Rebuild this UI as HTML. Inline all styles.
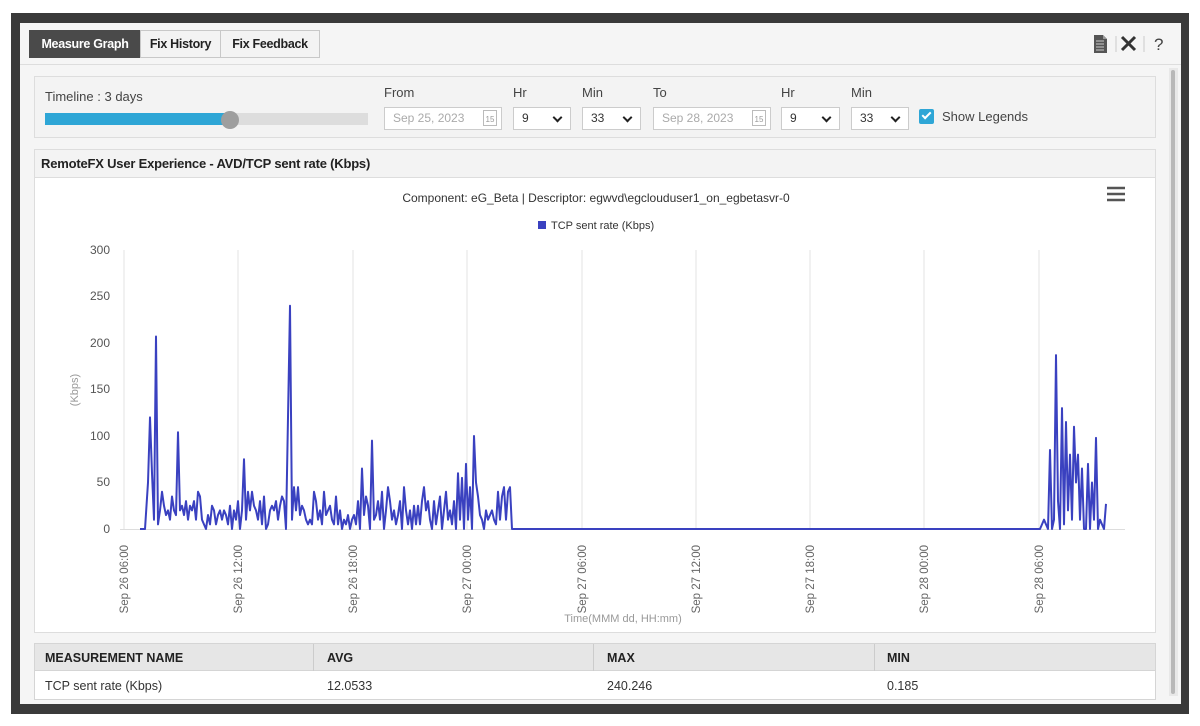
<!DOCTYPE html>
<html><head><meta charset="utf-8"><style>
*{box-sizing:border-box;margin:0;padding:0}
body{width:1200px;height:726px;background:#fff;position:relative;overflow:hidden;font-family:"Liberation Sans",sans-serif;font-size:13px;color:#333}
.a{position:absolute}
.frame{left:11px;top:13px;width:1178px;height:701px;background:#3a3a3a}
.inner{left:20px;top:23px;width:1161px;height:681px;background:#f5f5f5}
.tab{top:30px;height:28px;border:1px solid #c8c8c8;background:#f3f3f3;font-weight:bold;font-size:12.5px;line-height:26px;text-align:center;color:#222;letter-spacing:-0.3px}
.lbl{font-size:13px;color:#444}
.inp{height:23px;border:1px solid #ccc;background:#fff;font-size:12px;line-height:21px;padding-left:8px;color:#333}
.sel::after{content:"";position:absolute;right:9px;top:6px;width:5px;height:5px;border-right:2px solid #222;border-bottom:2px solid #222;transform:rotate(45deg)}
.th{font-weight:bold;font-size:12.5px;color:#222}
</style></head><body>
<div class="a frame"></div>
<div class="a inner"></div>
<div class="a tab" style="left:29px;width:112px;background:#4a4a4a;color:#fff;border-color:#4a4a4a">Measure Graph</div>
<div class="a tab" style="left:140px;width:81px">Fix History</div>
<div class="a tab" style="left:220px;width:100px">Fix Feedback</div>
<div class="a" style="left:20px;top:64px;width:1161px;height:1px;background:#ddd"></div>
<svg class="a" style="left:1092px;top:34px" width="80" height="20">
<path d="M2 1h9l4 4v14H2z" fill="#555"/><path d="M11 1v4h4" fill="#999"/>
<path d="M4 7h8M4 10h8M4 13h8M4 16h8" stroke="#ccc" stroke-width="1"/>
<line x1="24" y1="2" x2="24" y2="18" stroke="#ccc"/>
<path d="M30 3l13 13M43 3l-13 13" stroke="#333" stroke-width="3"/>
<line x1="52" y1="2" x2="52" y2="18" stroke="#ccc"/>
<text x="62" y="16" font-size="17" font-family="Liberation Sans" fill="#444">?</text>
</svg>
<div class="a" style="left:1169px;top:68px;width:9px;height:628px;background:#e8e8e8"></div>
<div class="a" style="left:1171px;top:70px;width:4px;height:624px;background:#b8b8b8;border-radius:2px"></div>
<div class="a" style="left:34px;top:76px;width:1122px;height:62px;background:#f3f3f3;border:1px solid #ddd"></div>
<div class="a lbl" style="left:45px;top:89px">Timeline : 3 days</div>
<div class="a" style="left:45px;top:113px;width:323px;height:12px;background:#ddd"></div>
<div class="a" style="left:45px;top:113px;width:186px;height:12px;background:#2ea6d6"></div>
<div class="a" style="left:221px;top:111px;width:18px;height:18px;border-radius:50%;background:#9e9e9e"></div>
<div class="a lbl" style="left:384px;top:85px">From</div>
<div class="a lbl" style="left:513px;top:85px">Hr</div>
<div class="a lbl" style="left:582px;top:85px">Min</div>
<div class="a lbl" style="left:653px;top:85px">To</div>
<div class="a lbl" style="left:781px;top:85px">Hr</div>
<div class="a lbl" style="left:851px;top:85px">Min</div>
<div class="a inp" style="left:384px;top:107px;width:118px;color:#aaa">Sep 25, 2023</div>
<div class="a" style="left:483px;top:110px;width:14px;height:16px;border:1px solid #bbb;font-size:8px;color:#999;text-align:center;line-height:18px">15</div>
<div class="a inp sel" style="left:513px;top:107px;width:58px">9</div>
<div class="a inp sel" style="left:582px;top:107px;width:59px">33</div>
<div class="a inp" style="left:653px;top:107px;width:118px;color:#aaa">Sep 28, 2023</div>
<div class="a" style="left:752px;top:110px;width:14px;height:16px;border:1px solid #bbb;font-size:8px;color:#999;text-align:center;line-height:18px">15</div>
<div class="a inp sel" style="left:781px;top:107px;width:59px">9</div>
<div class="a inp sel" style="left:851px;top:107px;width:58px">33</div>
<div class="a" style="left:919px;top:109px;width:15px;height:15px;background:#2ea6d6;border-radius:2px"></div>
<div class="a" style="left:924px;top:110px;width:5px;height:9px;border-right:2px solid #fff;border-bottom:2px solid #fff;transform:rotate(45deg)"></div>
<div class="a lbl" style="left:942px;top:109px">Show Legends</div>
<div class="a" style="left:34px;top:149px;width:1122px;height:484px;background:#fff;border:1px solid #ddd"></div>
<div class="a" style="left:35px;top:150px;width:1120px;height:28px;background:#f3f3f3;border-bottom:1px solid #ddd"></div>
<div class="a" style="left:41px;top:156px;font-weight:bold;font-size:13px;color:#222;letter-spacing:-0.2px">RemoteFX User Experience - AVD/TCP sent rate (Kbps)</div>
<svg class="a" style="left:0;top:0" width="1200" height="726" font-family="Liberation Sans">
<text x="596" y="202" text-anchor="middle" font-size="12" fill="#333">Component: eG_Beta | Descriptor: egwvd\egclouduser1_on_egbetasvr-0</text>
<path d="M1107 188h18M1107 194h18M1107 200h18" stroke="#555" stroke-width="2.5"/>
<rect x="538" y="221" width="8" height="8" fill="#3a41c0"/>
<text x="551" y="229" font-size="11" fill="#333">TCP sent rate (Kbps)</text>
<g stroke="#e3e3e3" stroke-width="1">
<line x1="124" y1="250" x2="124" y2="529"/><line x1="238" y1="250" x2="238" y2="529"/><line x1="353" y1="250" x2="353" y2="529"/><line x1="467" y1="250" x2="467" y2="529"/><line x1="582" y1="250" x2="582" y2="529"/><line x1="696" y1="250" x2="696" y2="529"/><line x1="810" y1="250" x2="810" y2="529"/><line x1="924" y1="250" x2="924" y2="529"/><line x1="1039" y1="250" x2="1039" y2="529"/>
<line x1="120" y1="529.5" x2="1125" y2="529.5" stroke="#ddd"/>
</g>
<g font-size="12" fill="#555" text-anchor="end">
<text x="110" y="254">300</text><text x="110" y="300">250</text><text x="110" y="347">200</text><text x="110" y="393">150</text><text x="110" y="440">100</text><text x="110" y="486">50</text><text x="110" y="533">0</text>
</g>
<text transform="translate(78,390) rotate(-90)" text-anchor="middle" font-size="11" fill="#999">(Kbps)</text>
<g font-size="11.5" fill="#666" text-anchor="end">
<text transform="translate(128,545) rotate(-90)">Sep 26 06:00</text>
<text transform="translate(242,545) rotate(-90)">Sep 26 12:00</text>
<text transform="translate(357,545) rotate(-90)">Sep 26 18:00</text>
<text transform="translate(471,545) rotate(-90)">Sep 27 00:00</text>
<text transform="translate(586,545) rotate(-90)">Sep 27 06:00</text>
<text transform="translate(700,545) rotate(-90)">Sep 27 12:00</text>
<text transform="translate(814,545) rotate(-90)">Sep 27 18:00</text>
<text transform="translate(928,545) rotate(-90)">Sep 28 00:00</text>
<text transform="translate(1043,545) rotate(-90)">Sep 28 06:00</text>
</g>
<text x="623" y="622" text-anchor="middle" font-size="11" fill="#999">Time(MMM dd, HH:mm)</text>
<g transform="translate(0,529) scale(1,-0.93)">
<polyline fill="none" stroke="#3a41c0" stroke-width="2" vector-effect="non-scaling-stroke" stroke-linejoin="round" points="140,0 145,0 148,50 150,120 152,60 154,10 156,207 158,5 160,20 162,40 164,25 166,15 168,20 170,10 172,35 174,20 176,15 178,104 180,20 182,25 184,15 186,30 188,10 190,25 192,20 194,30 196,10 198,40 200,35 202,10 204,5 206,0 208,15 210,5 212,25 214,20 216,5 218,15 220,20 222,10 224,20 226,15 228,5 230,25 232,0 234,20 236,10 238,30 240,0 242,20 244,75 246,10 248,40 250,20 252,40 254,25 256,20 258,10 260,30 262,5 264,35 266,0 268,5 270,20 272,25 274,20 276,30 278,10 280,25 282,35 284,30 286,0 290,240 292,10 294,45 296,20 298,45 300,15 302,25 304,20 306,10 308,5 310,10 312,5 314,40 316,30 318,10 320,20 322,5 324,40 326,15 328,20 330,25 332,10 334,5 336,35 338,5 340,20 342,0 344,10 346,5 348,15 350,0 352,10 354,15 356,5 358,30 360,0 362,65 364,15 366,35 368,25 370,0 372,95 374,10 376,15 378,30 380,10 382,40 384,0 386,20 388,45 390,30 392,10 394,20 396,5 398,15 400,30 402,0 404,45 406,20 408,5 410,20 412,0 414,25 416,5 418,25 420,5 422,30 424,45 426,20 428,30 430,10 432,0 434,30 436,5 438,20 440,35 442,0 444,20 446,40 448,10 450,20 452,5 454,30 456,0 458,60 460,10 462,55 464,0 466,70 468,10 470,45 472,0 474,100 476,50 478,35 480,15 482,10 484,0 486,20 488,10 490,15 492,20 494,10 496,5 498,40 500,10 502,35 504,45 506,10 508,40 510,45 512,0 1040,0 1042,5 1044,10 1046,5 1048,0 1050,85 1052,0 1054,10 1056,187 1058,30 1060,0 1062,130 1064,5 1066,115 1068,20 1070,80 1072,10 1074,110 1076,50 1078,80 1080,10 1082,65 1084,0 1086,0 1088,70 1090,0 1092,50 1094,10 1096,98 1098,0 1100,10 1102,5 1104,0 1106,27"/>
</g>
</svg>
<div class="a" style="left:34px;top:643px;width:1122px;height:57px;background:#fff;border:1px solid #d5d5d5"></div>
<div class="a" style="left:35px;top:644px;width:1120px;height:27px;background:#e6e6e6;border-bottom:1px solid #d5d5d5"></div>
<div class="a" style="left:313px;top:644px;width:1px;height:27px;background:#ccc"></div>
<div class="a" style="left:593px;top:644px;width:1px;height:27px;background:#ccc"></div>
<div class="a" style="left:874px;top:644px;width:1px;height:27px;background:#ccc"></div>
<div class="a th" style="left:45px;top:651px">MEASUREMENT NAME</div>
<div class="a th" style="left:327px;top:651px">AVG</div>
<div class="a th" style="left:607px;top:651px">MAX</div>
<div class="a th" style="left:887px;top:651px">MIN</div>
<div class="a" style="left:45px;top:679px;font-size:12.5px">TCP sent rate (Kbps)</div>
<div class="a" style="left:327px;top:679px;font-size:12.5px">12.0533</div>
<div class="a" style="left:607px;top:679px;font-size:12.5px">240.246</div>
<div class="a" style="left:887px;top:679px;font-size:12.5px">0.185</div>
</body></html>
